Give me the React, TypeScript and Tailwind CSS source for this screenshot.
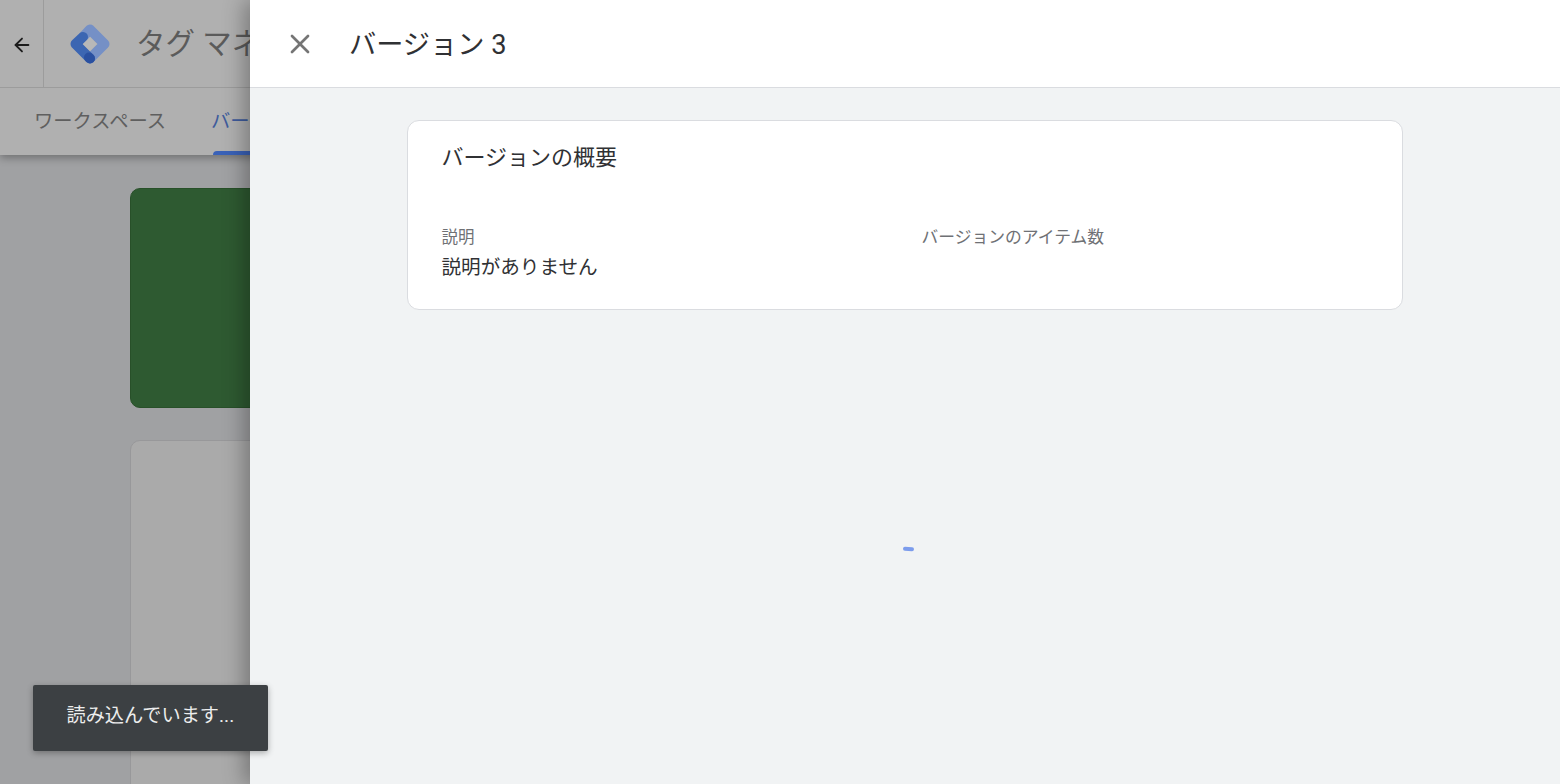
import React from "react";
import { ArrowLeft, X } from "lucide-react";

const FONT = "font-['Roboto','Noto_Sans_CJK_JP',sans-serif]";

function TagLogo() {
  return (
    <svg viewBox="0 0 42 42" className="w-[42px] h-[42px] shrink-0">
      <path d="M14 14 L21 6.5 L35.5 21 L22 34.5" fill="none" stroke="#7590c6" strokeWidth="10" strokeLinejoin="round" strokeLinecap="butt" />
      <path d="M14 14 L6.5 21 L21 35.5" fill="none" stroke="#3c66b2" strokeWidth="10" strokeLinejoin="round" strokeLinecap="round" />
      <path d="M20 34.5 L21 35.5" fill="none" stroke="#2a50a0" strokeWidth="10" strokeLinecap="round" />
      <path d="M21 14 L28 21 L21 28 L14 21 Z" fill="#b8b8b8" />
    </svg>
  );
}

function BehindPage() {
  return (
    <div className="w-[250px] shrink-0 h-full overflow-hidden bg-[#a0a1a3] flex flex-col">
      <div className="w-[1310px] shadow-[0_3px_8px_rgba(0,0,0,0.3)] bg-[#b0b0b0]">
        <div className="h-[88px] flex items-center border-b border-[#9c9c9c]">
          <div className="w-[44px] h-full flex items-center justify-center border-r border-[#9c9c9c] text-[#1c1c1c]">
            <ArrowLeft className="w-[22px] h-[22px] mt-[3px]" strokeWidth={2} />
          </div>
          <div className="ml-[25px]">
            <TagLogo />
          </div>
          <span className="ml-[25px] pt-[2px] text-[29.5px] text-[#5b5b5b] whitespace-nowrap">タグ マネージャー</span>
        </div>
        <div className="h-[67px] flex pl-[34px] gap-[45px]">
          <span className="mt-[21px] text-[19.3px] leading-[26px] text-[#5f5f5f] whitespace-nowrap">ワークスペース</span>
          <div className="relative h-full whitespace-nowrap">
            <span className="block mt-[21px] text-[19.3px] leading-[26px] text-[#3f5c9c]">バージョン</span>
            <div className="absolute left-[2px] right-0 bottom-0 h-[4px] rounded-t-[4px] bg-[#3a62b8]" />
          </div>
        </div>
      </div>
      <div className="w-[1100px] ml-[130px] mt-[33px] h-[220px] shrink-0 rounded-[10px] bg-[#2e5a31] border border-[#285029]" />
      <div className="w-[1100px] ml-[130px] mt-[32px] h-[500px] shrink-0 rounded-[10px] bg-[#aaaaaa] border border-[#98989a]" />
    </div>
  );
}

function Drawer() {
  return (
    <div className="relative z-10 flex-1 h-full flex flex-col bg-[#f1f3f4] shadow-[-6px_0_20px_rgba(0,0,0,0.3)]">
      <div className="h-[88px] shrink-0 bg-white border-b border-[#dadce0] flex items-center">
        <X className="ml-[34px] w-[32px] h-[32px] text-[#757575]" strokeWidth={2} />
        <h1 className="ml-[33px] pt-[3px] text-[27.2px] font-normal text-[#303134] whitespace-nowrap">バージョン 3</h1>
      </div>
      <section className="mt-[32px] mx-auto w-[996px] h-[190px] shrink-0 bg-white border border-[#dadce0] rounded-[12px] pl-[33.5px] pt-[22px]">
        <h2 className="text-[22px] leading-[30px] font-normal text-[#303134]">バージョンの概要</h2>
        <div className="mt-[53px] grid grid-cols-[480px_1fr]">
          <div>
            <div className="text-[16.5px] leading-[24px] text-[#6f7175]">説明</div>
            <div className="mt-[4px] text-[19.6px] leading-[28px] text-[#303134]">説明がありません</div>
          </div>
          <div className="-mt-px text-[16.8px] leading-[24px] text-[#6f7175]">バージョンのアイテム数</div>
        </div>
      </section>
      <div className="mt-[237px] ml-[653px] w-[11px] h-[4px] rounded-[2px] bg-[#7c9cec] rotate-[3deg]" />
    </div>
  );
}

export default function App() {
  return (
    <div className={`relative h-screen w-full flex overflow-hidden ${FONT}`}>
      <BehindPage />
      <Drawer />
      {/* snackbar */}
      <div className="absolute z-20 left-[33px] top-[685px] w-[235px] h-[66px] flex items-center pb-[4px] pl-[33.5px] rounded-[2px] bg-[#3c4043] text-[#eceded] text-[19.2px] whitespace-nowrap shadow-[0_2px_6px_rgba(0,0,0,0.3)]">
        読み込んでいます...
      </div>
    </div>
  );
}
